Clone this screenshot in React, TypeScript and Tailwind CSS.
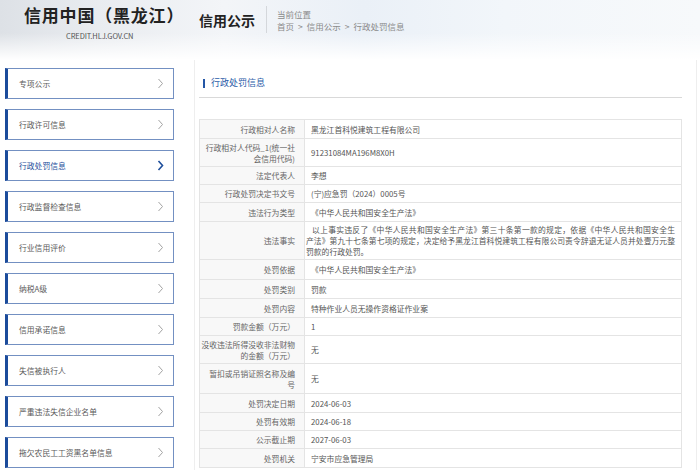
import React from "react";

type Row = { label: React.ReactNode; value: React.ReactNode; h: string; para?: boolean };

const Chevron = ({ active }: { active?: boolean }) => (
  <svg width="7" height="11" viewBox="0 0 7 11" fill="none">
    <polyline
      points="1.5,1 5.5,5.5 1.5,10"
      stroke={active ? "#1f4f9c" : "#a3a3a3"}
      strokeWidth={active ? 1.6 : 1}
      fill="none"
    />
  </svg>
);

const menu = [
  "专项公示",
  "行政许可信息",
  "行政处罚信息",
  "行政监督检查信息",
  "行业信用评价",
  "纳税A级",
  "信用承诺信息",
  "失信被执行人",
  "严重违法失信企业名单",
  "拖欠农民工工资黑名单信息",
];

const rows: Row[] = [
  { label: "行政相对人名称", value: "黑龙江首科悦建筑工程有限公司", h: "h-[19px]" },
  {
    label: (
      <>
        行政相对人代码_1(统一社
        <br />
        会信用代码)
      </>
    ),
    value: "91231084MA196M8X0H",
    h: "h-[28px]",
  },
  { label: "法定代表人", value: "李想", h: "h-[18px]" },
  { label: "行政处罚决定书文号", value: "(宁)应急罚（2024）0005号", h: "h-[18px]" },
  { label: "违法行为类型", value: "《中华人民共和国安全生产法》", h: "h-[19px]" },
  {
    label: "违法事实",
    value: (
      <div className="w-[369px] whitespace-nowrap">
        <div className="pl-[6px] [text-align-last:justify]">
          以上事实违反了《中华人民共和国安全生产法》第三十条第一款的规定，依据《中华人民共和国安全生
        </div>
        <div className="[text-align-last:justify]">
          产法》第九十七条第七项的规定，决定给予黑龙江首科悦建筑工程有限公司责令辞退无证人员并处壹万元整
        </div>
        <div>罚款的行政处罚。</div>
      </div>
    ),
    h: "h-[38px]",
    para: true,
  },
  { label: "处罚依据", value: "《中华人民共和国安全生产法》", h: "h-[20px]" },
  { label: "处罚类别", value: "罚款", h: "h-[19px]" },
  { label: "处罚内容", value: "特种作业人员无操作资格证作业案", h: "h-[19px]" },
  { label: "罚款金额（万元）", value: "1", h: "h-[18px]" },
  {
    label: (
      <>
        没收违法所得没收非法财物
        <br />
        的金额（万元）
      </>
    ),
    value: "无",
    h: "h-[28px]",
  },
  {
    label: (
      <>
        暂扣或吊销证照名称及编
        <br />号
      </>
    ),
    value: "无",
    h: "h-[30px]",
  },
  { label: "处罚决定日期", value: "2024-06-03", h: "h-[19px]" },
  { label: "处罚有效期", value: "2024-06-18", h: "h-[18px]" },
  { label: "公示截止期", value: "2027-06-03", h: "h-[18px]" },
  { label: "处罚机关", value: "宁安市应急管理局", h: "h-[19px]" },
];

export default function App() {
  return (
    <div className="w-[700px] h-[470px] overflow-hidden bg-white font-['Noto_Sans_CJK_SC','Liberation_Sans',sans-serif] text-[#555]">
      {/* Header */}
      <div className="h-[60px] flex items-start pl-[24px] pt-[5px] bg-[linear-gradient(180deg,rgba(255,255,255,0)_55%,#ffffff_100%),linear-gradient(90deg,#dde1e6_0%,#e9ecf0_14%,#f3f5f8_32%,#eaf0f7_52%,#f2f6fa_72%,#f7f9fb_100%)]">
        <div className="flex flex-col items-start w-[160px]">
          <div className="text-[17px] leading-[20px] font-bold text-[#222] whitespace-nowrap tracking-[0.8px]">信用中国（黑龙江）</div>
          <div className="mt-[6px] ml-[42px] text-[7.5px] leading-[10px] text-[#555] tracking-[-0.1px]">CREDIT.HLJ.GOV.CN</div>
        </div>
        <div className="ml-[15px] mt-[6px] text-[14px] leading-[18px] font-bold text-[#222] whitespace-nowrap">信用公示</div>
        <div className="ml-[11px] mt-[1px] w-px h-[27px] bg-[#d4d7db]" />
        <div className="ml-[10px] mt-[3px] flex flex-col text-[8.5px] leading-[12px] text-[#8a8a8a] whitespace-nowrap">
          <span>当前位置</span>
          <span className="flex items-center">
            首页<span className="mx-[4px]">&gt;</span>信用公示<span className="mx-[4px]">&gt;</span>行政处罚信息
          </span>
        </div>
      </div>

      {/* Body */}
      <div className="flex">
        {/* Sidebar */}
        <div className="w-[194px] pl-[5px] pt-[8px] flex flex-col gap-[10px]">
          {menu.map((m, i) => {
            const active = i === 2;
            return (
              <div
                key={m}
                className="w-[169px] h-[31px] bg-white border border-[#7390c2] border-l-[3px] border-l-[#1b4b9b] flex items-center justify-between pl-[11px] pr-[9px]"
              >
                <span className={active ? "text-[7.8px] text-[#1f4f9c]" : "text-[7.8px] text-[#5a5a5a]"}>{m}</span>
                <Chevron active={active} />
              </div>
            );
          })}
        </div>

        {/* Main */}
        <div className="w-[503px] h-[410px] border-l border-r border-[#eeeeee] pl-[4px] pt-[17px]">
          <div className="w-[483px] border-b border-[#d9d9d9] pb-[8px] flex items-center">
            <div className="ml-[4px] w-[2px] h-[9px] bg-[#2456a6]" />
            <span className="ml-[6px] text-[9px] leading-[12px] text-[#2b5ca8]">行政处罚信息</span>
          </div>
          <div className="mt-[21px] w-[483px] border-l border-r border-t border-[#e4e4e4]">
            {rows.map((r, i) => (
              <div key={i} className={`flex border-b border-[#e4e4e4] ${r.h}`}>
                <div className="w-[105px] shrink-0 bg-[#f8f8f8] border-r border-[#e4e4e4] flex items-center justify-end pr-[9px] text-right text-[7.8px] leading-[11px] text-[#666] whitespace-nowrap">
                  <span>{r.label}</span>
                </div>
                <div
                  className={
                    r.para
                      ? "flex-1 flex items-center text-[7.8px] leading-[11px] text-[#555] pl-[1px]"
                      : "flex-1 flex items-center text-[7.8px] leading-[11px] text-[#555] pl-[6px]"
                  }
                >
                  {r.value}
                </div>
              </div>
            ))}
          </div>
        </div>
      </div>
    </div>
  );
}
